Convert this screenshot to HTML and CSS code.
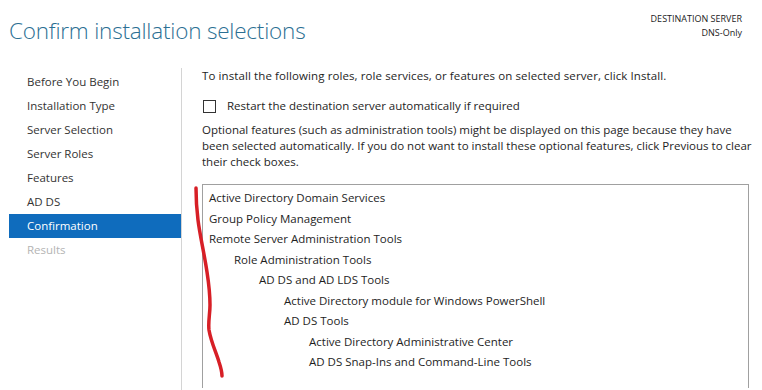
FILE: index.html
```html
<!DOCTYPE html>
<html lang="en">
  <head>
    <meta charset="UTF-8" />
    <title>Confirm installation selections</title>
    <link rel="stylesheet" href="styles.css">
  </head>
  <body>
    <header class="top">
      <h1>Confirm installation selections</h1>
      <div class="dest">
        <div>DESTINATION SERVER</div>
        <div>DNS-Only</div>
      </div>
    </header>

    <main class="wizard">
      <ul class="steps">
        <li>Before You Begin</li>
        <li>Installation Type</li>
        <li>Server Selection</li>
        <li>Server Roles</li>
        <li>Features</li>
        <li>AD DS</li>
        <li class="current">Confirmation</li>
        <li class="disabled">Results</li>
      </ul>

      <section class="page">
        <p class="intro">To install the following roles, role services, or features on selected server, click Install.</p>
        <label class="restart"><span class="box"></span>Restart the destination server automatically if required</label>
        <p class="note">Optional features (such as administration tools) might be displayed on this page because they have<br>
          been selected automatically. If you do not want to install these optional features, click Previous to clear<br>
          their check boxes.</p>

        <div class="selections">
          <div class="item">Active Directory Domain Services</div>
          <div class="item">Group Policy Management</div>
          <div class="item">Remote Server Administration Tools</div>
          <div class="item lvl1">Role Administration Tools</div>
          <div class="item lvl2">AD DS and AD LDS Tools</div>
          <div class="item lvl3">Active Directory module for Windows PowerShell</div>
          <div class="item lvl3">AD DS Tools</div>
          <div class="item lvl4">Active Directory Administrative Center</div>
          <div class="item lvl4">AD DS Snap-Ins and Command-Line Tools</div>
        </div>
      </section>
    </main>

    <!-- red pen mark drawn over the screenshot -->
    <svg class="scribble" width="762" height="390" viewBox="0 0 762 390">
      <path d="M196 188 C196 200 197 212 198 220 C200 236 204 252 207 272 C209 285 210 296 210 305 C210 314 208 322 209 330 C211 342 216 352 219 362 C221 368 222 372 222 376" />
    </svg>
  </body>
</html>
```

FILE: styles.css
```css
body {
  margin: 0;
  width: 762px;
  height: 390px;
  overflow: hidden;
  background: #fff;
  font-family: "Open Sans", "Noto Sans", sans-serif;
  font-size: 11.5px;
  color: #1e1e1e;
  position: relative;
}

.top {
  display: flex;
  justify-content: space-between;
  height: 68px;
  padding: 0 20px 0 9px;
}

h1 {
  margin: 15px 0 0;
  font-size: 22.5px;
  font-weight: 300;
  color: #2b6f93;
  letter-spacing: -0.2px;
}

.dest {
  margin-top: 12px;
  text-align: right;
  font-size: 9px;
  line-height: 14px;
  color: #222;
}

.wizard {
  display: flex;
}

.steps {
  list-style: none;
  margin: 0 0 0 9px;
  padding: 2px 0 0;
  width: 172px;
  height: 322px;
  border-right: 1px solid #d4d4d4;
}

.steps li {
  height: 24px;
  line-height: 24px;
  padding-left: 18px;
  color: #333;
}

.steps li.current {
  background: #0f6cbd;
  color: #fff;
}

.steps li.disabled {
  color: #b4b4b4;
}

.page {
  margin-left: 20px;
  width: 547px;
  line-height: 16px;
}

.intro {
  margin: 0;
  letter-spacing: 0.1px;
}

.restart {
  display: flex;
  align-items: center;
  margin-top: 14px;
  height: 16px;
}

.restart .box {
  width: 11px;
  height: 11px;
  border: 1px solid #333;
  margin: 0 11px 0 1px;
}

.note {
  margin: 8px -20px 0 0;
  white-space: nowrap;
}

.selections {
  margin-top: 14px;
  height: 200px;
  border: 1px solid #a0a0a0;
  border-bottom: none;
  padding: 3px 0 0 6px;
}

.item {
  line-height: 20.5px;
}

.lvl1 { padding-left: 25px; }
.lvl2 { padding-left: 50px; }
.lvl3 { padding-left: 75px; }
.lvl4 { padding-left: 100px; }

.scribble {
  position: absolute;
  top: 0;
  left: 0;
  pointer-events: none;
}

.scribble path {
  fill: none;
  stroke: #d71f26;
  stroke-width: 3.5;
  stroke-linecap: round;
}
```
